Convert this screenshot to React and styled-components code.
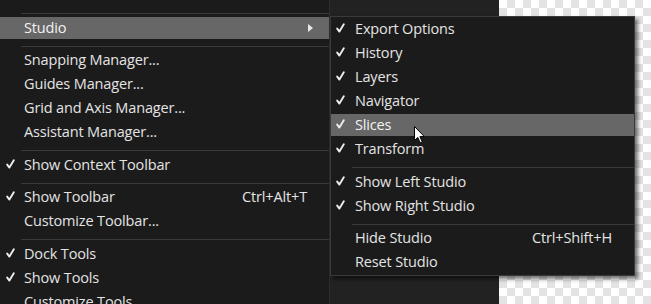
import React from "react";
import styled, { createGlobalStyle, css } from "styled-components";

const GlobalStyle = createGlobalStyle`
  html, body { margin: 0; padding: 0; background: #232323; }
  body { font-family: "Open Sans", "Noto Sans", sans-serif; }
  #root { width: 651px; height: 304px; }
`;

const Screen = styled.div`
  position: relative;
  display: flex;
  width: 651px;
  height: 304px;
  overflow: hidden;
  background: #232323;
`;

const MainMenu = styled.div`
  width: 329px;
  flex: none;
  border-right: 1px solid #2d2d2d;
  background: #1b1b1b;
  overflow: hidden;
`;

const MenuList = styled.div`
  display: flex;
  flex-direction: column;
  margin-top: ${(p) => p.$offset || 0}px;
`;

const Panel = styled.div`
  width: 169px;
  flex: none;
  background: #222222;
`;

const Canvas = styled.div`
  flex: 1;
  background-color: #ffffff;
  background-image:
    linear-gradient(45deg, #e3e3e3 25%, transparent 25%, transparent 75%, #e3e3e3 75%),
    linear-gradient(45deg, #e3e3e3 25%, transparent 25%, transparent 75%, #e3e3e3 75%);
  background-size: 16px 16px;
  background-position: 0 0, 8px 8px;
`;

const SubMenu = styled.div`
  position: absolute;
  left: 330px;
  top: 16px;
  width: 303px;
  border: 1px solid #3a3a3a;
  background: #1b1b1b;
  padding-bottom: 1px;
  box-shadow: 3px 3px 4px rgba(0, 0, 0, 0.55);
`;

const Row = styled.div`
  height: 24px;
  padding: 1px 0;
  box-sizing: border-box;
`;

const RowInner = styled.div`
  position: relative;
  display: flex;
  align-items: center;
  height: 22px;
  line-height: 22px;
  font-size: 14.5px;
  letter-spacing: -0.15px;
  color: #e4e4e4;
  white-space: nowrap;
  padding-left: ${(p) => p.$indent}px;
  padding-right: 22px;
  ${(p) =>
    p.$active &&
    css`
      background: #676767;
      color: #f2f2f2;
    `}
`;

const CheckBox = styled.svg`
  position: absolute;
  left: ${(p) => p.$left}px;
  top: 5px;
  display: block;
`;

const Label = styled.span`
  flex: 1;
`;

const Shortcut = styled.span`
  flex: none;
`;

const Arrow = styled.span`
  position: absolute;
  right: 16px;
  top: 7px;
  width: 0;
  height: 0;
  border-top: 4px solid transparent;
  border-bottom: 4px solid transparent;
  border-left: 5px solid #e8e8e8;
`;

const Separator = styled.div`
  height: 1px;
  margin: 6px 0 1.5px ${(p) => p.$indent}px;
  background: #3a3a3a;
`;

const Cursor = styled.svg`
  position: absolute;
  left: 413px;
  top: 125px;
`;

const Check = ({ left }) => (
  <CheckBox $left={left} width="9" height="10" viewBox="0 0 9 10">
    <path
      d="M1.2 5.6 L3.4 8.6 L7.8 1.2"
      fill="none"
      stroke="#ededed"
      strokeWidth="1.9"
      strokeLinecap="round"
      strokeLinejoin="round"
    />
  </CheckBox>
);

const mainItems = [
  { label: "Lock Guides" },
  { sep: true },
  { label: "Studio", active: true, submenu: true },
  { sep: true },
  { label: "Snapping Manager..." },
  { label: "Guides Manager..." },
  { label: "Grid and Axis Manager..." },
  { label: "Assistant Manager..." },
  { sep: true },
  { label: "Show Context Toolbar", checked: true },
  { sep: true },
  { label: "Show Toolbar", checked: true, shortcut: "Ctrl+Alt+T" },
  { label: "Customize Toolbar..." },
  { sep: true },
  { label: "Dock Tools", checked: true },
  { label: "Show Tools", checked: true },
  { label: "Customize Tools..." },
];

const subItems = [
  { label: "Export Options", checked: true },
  { label: "History", checked: true },
  { label: "Layers", checked: true },
  { label: "Navigator", checked: true },
  { label: "Slices", checked: true, active: true },
  { label: "Transform", checked: true },
  { sep: true },
  { label: "Show Left Studio", checked: true },
  { label: "Show Right Studio", checked: true },
  { sep: true },
  { label: "Hide Studio", shortcut: "Ctrl+Shift+H" },
  { label: "Reset Studio" },
];

const MenuItems = ({ items, indent, checkLeft, sepIndent }) =>
  items.map((it, i) =>
    it.sep ? (
      <Separator key={i} $indent={sepIndent} />
    ) : (
      <Row key={i}>
        <RowInner $indent={indent} $active={it.active}>
          {it.checked && <Check left={checkLeft} />}
          <Label>{it.label}</Label>
          {it.shortcut && <Shortcut>{it.shortcut}</Shortcut>}
          {it.submenu && <Arrow />}
        </RowInner>
      </Row>
    )
  );

export default function App() {
  return (
    <>
      <GlobalStyle />
      <Screen>
        <MainMenu>
          <MenuList $offset={-17}>
            <MenuItems items={mainItems} indent={24} checkLeft={6} sepIndent={21} />
          </MenuList>
        </MainMenu>
        <Panel />
        <Canvas />
        <SubMenu>
          <MenuList>
            <MenuItems items={subItems} indent={24} checkLeft={5} sepIndent={21} />
          </MenuList>
        </SubMenu>
        <Cursor width="13" height="20" viewBox="0 0 13 20">
          <path
            d="M1.5 1.5 L1.5 15.5 L4.8 12.4 L7.2 17.8 L9.3 16.9 L6.9 11.6 L11.4 11.6 Z"
            fill="#ffffff"
            stroke="#000000"
            strokeWidth="1"
            strokeLinejoin="miter"
          />
        </Cursor>
      </Screen>
    </>
  );
}
